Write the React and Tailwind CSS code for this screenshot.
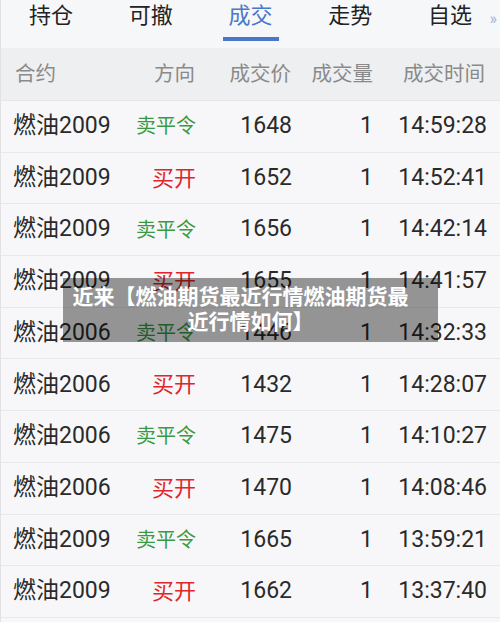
import React from "react";

const rows = [
  ["燃油2009", "sell", "1648", "1", "14:59:28"],
  ["燃油2009", "buy", "1652", "1", "14:52:41"],
  ["燃油2009", "sell", "1656", "1", "14:42:14"],
  ["燃油2009", "buy", "1655", "1", "14:41:57"],
  ["燃油2006", "sell", "1446", "1", "14:32:33"],
  ["燃油2006", "buy", "1432", "1", "14:28:07"],
  ["燃油2006", "sell", "1475", "1", "14:10:27"],
  ["燃油2006", "buy", "1470", "1", "14:08:46"],
  ["燃油2009", "sell", "1665", "1", "13:59:21"],
  ["燃油2009", "buy", "1662", "1", "13:37:40"],
];

const tabs = ["持仓", "可撤", "成交", "走势", "自选"];

export default function App() {
  return (
    <div
      className="relative w-[500px] h-[622px] overflow-hidden bg-[#f7f7f9] border-l border-[#e2e2e4]"
      style={{ fontFamily: 'Roboto, "Noto Sans CJK SC", sans-serif' }}
    >
      {/* Tab bar */}
      <div className="relative flex h-[48px] bg-[#f6f7f9]">
        {tabs.map((t, i) => (
          <div key={t} className="relative flex-1 flex justify-center pt-[3px]">
            <span
              className={
                "text-[22px] leading-[26px] " +
                (i === 2 ? "text-[#4a78c8]" : "text-[#222]")
              }
            >
              {t}
            </span>
            {i === 2 && (
              <div className="absolute left-[22px] w-[56px] top-[37px] h-[4px] bg-[#4a78c8]" />
            )}
          </div>
        ))}
        <div className="absolute right-[3px] top-[9px] text-[16px] leading-[20px] text-[#9db3e0]">
          »
        </div>
      </div>

      {/* Header */}
      <div className="flex items-center h-[53px] bg-[#eeeff1] text-[20.5px] text-[#8a8a8a] border-b border-[#e6e6e8]">
        <div className="w-[119px] pl-[14px]">合约</div>
        <div className="w-[75px] text-right">方向</div>
        <div className="w-[96px] text-right">成交价</div>
        <div className="w-[82px] text-right">成交量</div>
        <div className="w-[112px] text-right">成交时间</div>
      </div>

      {/* Rows */}
      {rows.map((r, idx) => (
        <div
          key={idx}
          className="flex items-center h-[51.7px] border-b border-[#e9e9eb] text-[23px] text-[#2a2a2a]"
        >
          <div className="w-[119px] pl-[12px] whitespace-nowrap">{r[0]}</div>
          <div
            className={
              "w-[76px] text-right " +
              (r[1] === "sell"
                ? "text-[#3a9a44] text-[20px]"
                : "text-[#e0262a] text-[22px]")
            }
          >
            {r[1] === "sell" ? "卖平令" : "买开"}
          </div>
          <div className="w-[96px] text-right">{r[2]}</div>
          <div className="w-[81px] text-right">{r[3]}</div>
          <div className="w-[114px] text-right">{r[4]}</div>
        </div>
      ))}

      {/* Overlay */}
      <div className="absolute left-[62px] top-[278px] w-[375px] h-[64px] bg-black/40 flex flex-col items-center justify-center text-white font-bold text-[21px] leading-[25px]">
        <div className="pr-[20px] whitespace-nowrap">近来【燃油期货最近行情燃油期货最</div>
        <div>近行情如何】</div>
      </div>
    </div>
  );
}
